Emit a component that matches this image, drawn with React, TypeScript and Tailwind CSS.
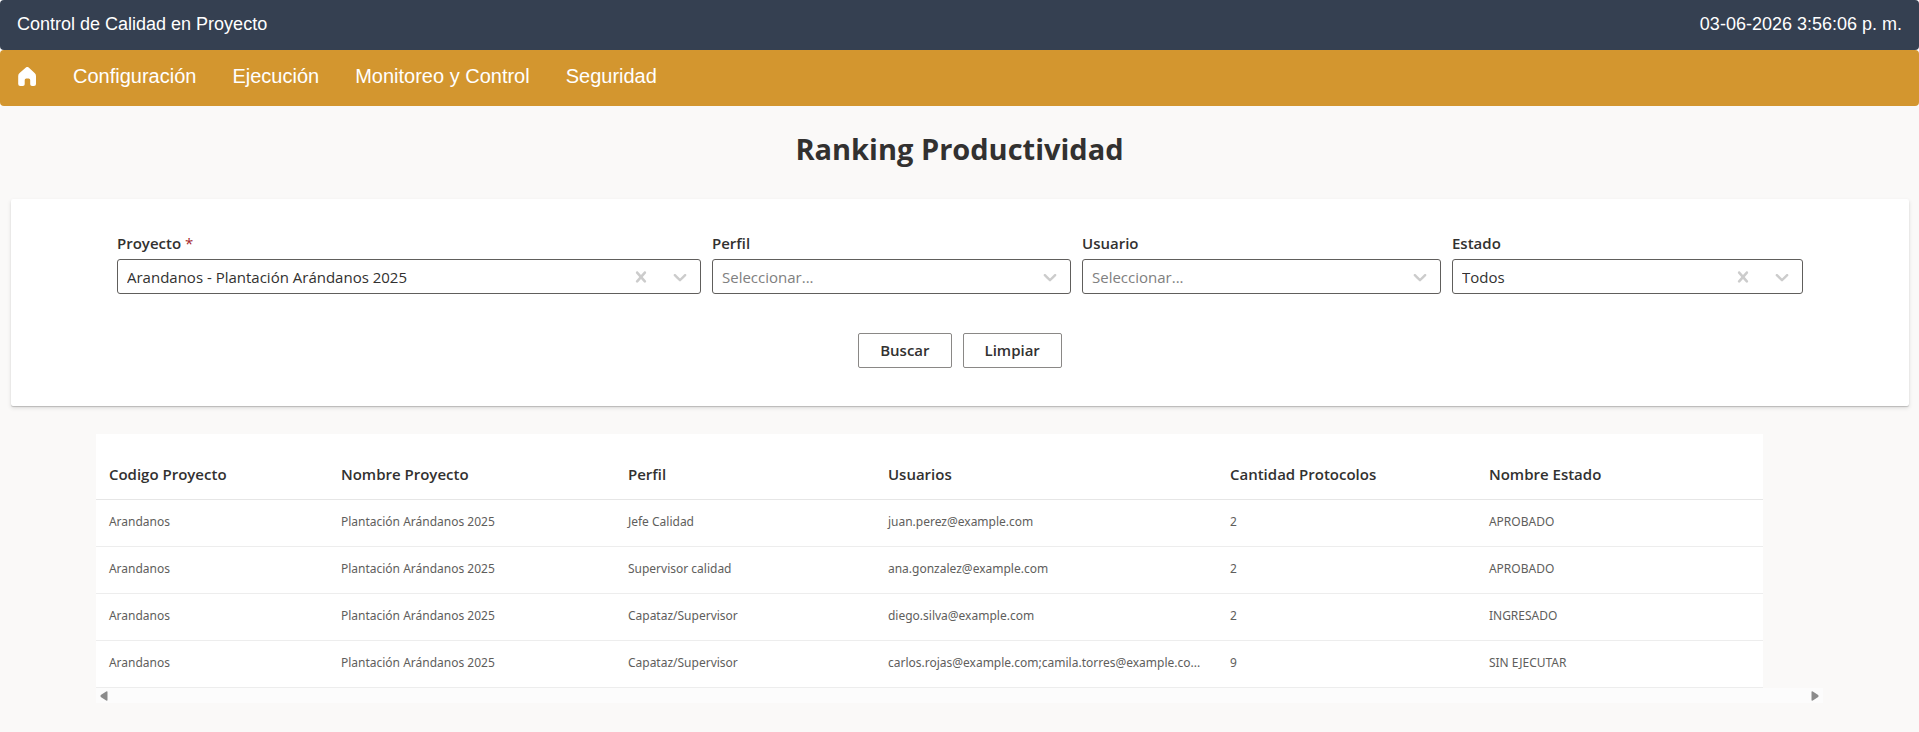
import { useState } from "react";

const navItems = ["Configuración", "Ejecución", "Monitoreo y Control", "Seguridad"];

const columns = [
    { name: "Codigo Proyecto", width: "w-[232px]" },
    { name: "Nombre Proyecto", width: "w-[287px]" },
    { name: "Perfil", width: "w-[260px]" },
    { name: "Usuarios", width: "w-[342px]" },
    { name: "Cantidad Protocolos", width: "w-[259px]" },
    { name: "Nombre Estado", width: "w-[287px]" },
];

const rows = [
    ["Arandanos", "Plantación Arándanos 2025", "Jefe Calidad", "juan.perez@example.com", "2", "APROBADO"],
    ["Arandanos", "Plantación Arándanos 2025", "Supervisor calidad", "ana.gonzalez@example.com", "2", "APROBADO"],
    ["Arandanos", "Plantación Arándanos 2025", "Capataz/Supervisor", "diego.silva@example.com", "2", "INGRESADO"],
    [
        "Arandanos",
        "Plantación Arándanos 2025",
        "Capataz/Supervisor",
        "carlos.rojas@example.com;camila.torres@example.co...",
        "9",
        "SIN EJECUTAR",
    ],
];

const App = () => {
    const [filters, setFilters] = useState({
        proyecto: "Arandanos - Plantación Arándanos 2025",
        perfil: "",
        usuario: "",
        estado: "Todos",
    });

    const setFilter = (key: string, value: string) => {
        setFilters((prev) => ({ ...prev, [key]: value }));
    };

    const clear = () => {
        setFilters({ proyecto: "", perfil: "", usuario: "", estado: "" });
    };

    return (
        <div className="min-h-screen bg-[#faf9f8] font-['Open_Sans',sans-serif] text-[#323130]">
            <header className="font-['Liberation_Sans',sans-serif] text-lg text-white bg-white">
                <div className="flex h-[50px] items-center justify-between rounded-[4px] bg-[#354051] px-[17px] pb-[2px]">
                    <span>Control de Calidad en Proyecto</span>
                    <time>03-06-2026 3:56:06 p. m.</time>
                </div>
                <nav className="flex h-[56px] items-center gap-9 rounded-[4px] bg-[#d3962f] px-[17px] pb-[3px]">
                    <a href="#inicio" aria-label="Inicio">
                        <HomeIcon />
                    </a>
                    {navItems.map((item) => (
                        <a key={item} href="#" className="text-[20px]">
                            {item}
                        </a>
                    ))}
                </nav>
            </header>

            <h1 className="pt-[21px] pb-7 text-center text-[29px] leading-[44px] font-bold">
                Ranking Productividad
            </h1>

            <section className="mr-[10px] ml-[11px] rounded-[2px] bg-white px-[106px] pt-[33px] pb-[38px] shadow-[0_1px_1px_rgba(0,0,0,0.18),0_2px_4px_rgba(0,0,0,0.12)]">
                <div className="flex gap-[11px]">
                    <Field
                        id="proyecto"
                        label="Proyecto"
                        required
                        className="flex-[584]"
                        options={["Arandanos - Plantación Arándanos 2025"]}
                        value={filters.proyecto}
                        onChange={setFilter}
                    />
                    <Field
                        id="perfil"
                        label="Perfil"
                        className="flex-[359]"
                        options={["Jefe Calidad", "Supervisor calidad", "Capataz/Supervisor"]}
                        value={filters.perfil}
                        onChange={setFilter}
                    />
                    <Field
                        id="usuario"
                        label="Usuario"
                        className="flex-[359]"
                        options={["juan.perez@example.com", "ana.gonzalez@example.com"]}
                        value={filters.usuario}
                        onChange={setFilter}
                    />
                    <Field
                        id="estado"
                        label="Estado"
                        className="flex-[351]"
                        options={["Todos", "APROBADO", "INGRESADO", "SIN EJECUTAR"]}
                        value={filters.estado}
                        onChange={setFilter}
                    />
                </div>
                <div className="mt-[39px] flex justify-center gap-[11px]">
                    <button className="h-[35px] rounded-[2px] border border-[#8a8886] px-[21px] text-[15px] font-semibold">
                        Buscar
                    </button>
                    <button
                        className="h-[35px] rounded-[2px] border border-[#8a8886] px-[21px] text-[15px] font-semibold"
                        onClick={clear}
                    >
                        Limpiar
                    </button>
                </div>
            </section>

            <div className="mx-[5%] mt-7">
                <table className="w-[1667px] table-fixed border-separate border-spacing-0 bg-white text-left">
                    <thead>
                        <tr className="h-[66px]">
                            {columns.map((col) => (
                                <th
                                    key={col.name}
                                    className={`${col.width} border-b border-[#e6e6e6] pt-4 pr-2 pl-[13px] text-[15px] font-semibold`}
                                >
                                    {col.name}
                                </th>
                            ))}
                        </tr>
                    </thead>
                    <tbody>
                        {rows.map((row, i) => (
                            <tr key={i} className="h-[47px] font-['Noto_Sans',sans-serif] text-xs text-[#605e5c]">
                                {row.map((cell, j) => (
                                    <td key={j} className="truncate border-b border-[#ededed] pr-2 pb-[2px] pl-[13px]">
                                        {cell}
                                    </td>
                                ))}
                            </tr>
                        ))}
                    </tbody>
                </table>
                <div className="flex h-[15px] items-center justify-between bg-[#fcfcfc] px-1">
                    <button aria-label="Desplazar a la izquierda">
                        <svg width="8" height="10" viewBox="0 0 8 10" fill="#8b8b8b">
                            <path d="M6.200.5Q7.500 0 7.500 1v8q0 1-1.300.5L.8 6Q0 5 .8 4z" />
                        </svg>
                    </button>
                    <button aria-label="Desplazar a la derecha">
                        <svg width="8" height="10" viewBox="0 0 8 10" fill="#8b8b8b">
                            <path d="M1.800.5Q.5 0 .5 1v8q0 1 1.300.5L7.200 6Q8 5 7.200 4z" />
                        </svg>
                    </button>
                </div>
            </div>
        </div>
    );
};

type FieldProps = {
    id: string;
    label: string;
    required?: boolean;
    className: string;
    options: string[];
    value: string;
    onChange: (key: string, value: string) => void;
};

const Field = ({ id, label, required, className, options, value, onChange }: FieldProps) => {
    return (
        <div className={`min-w-0 ${className}`}>
            <label htmlFor={id} className="block pb-[5px] text-[15px] leading-[22px] font-semibold">
                {label}
                {required && <span className="font-normal text-[#a4262c]"> *</span>}
            </label>
            <div className="relative">
                <select
                    id={id}
                    value={value}
                    onChange={(ev) => onChange(id, ev.target.value)}
                    className={`block h-[35px] w-full appearance-none rounded-[3px] border border-[#605e5c] bg-white pt-[2px] pr-20 pl-[9px] text-[15px] ${
                        value ? "text-[#323130]" : "text-[#808080]"
                    }`}
                >
                    <option value="">Seleccionar...</option>
                    {options.map((option) => (
                        <option key={option}>{option}</option>
                    ))}
                </select>
                <div className="pointer-events-none absolute inset-y-0 right-[10px] flex items-center gap-[17px] text-[#cccccc]">
                    {value && (
                        <button
                            className="pointer-events-auto"
                            aria-label={`Limpiar ${label}`}
                            onClick={() => onChange(id, "")}
                        >
                            <svg width="22" height="22" viewBox="0 0 20 20" fill="currentColor">
                                <path d="M14.348 14.849c-0.469 0.469-1.229 0.469-1.697 0l-2.651-3.030-2.651 3.029c-0.469 0.469-1.229 0.469-1.697 0-0.469-0.469-0.469-1.229 0-1.697l2.758-3.150-2.759-3.152c-0.469-0.469-0.469-1.228 0-1.697s1.228-0.469 1.697 0l2.652 3.031 2.651-3.031c0.469-0.469 1.228-0.469 1.697 0s0.469 1.229 0 1.697l-2.758 3.152 2.758 3.150c0.469 0.469 0.469 1.229 0 1.698z" />
                            </svg>
                        </button>
                    )}
                    <svg width="22" height="22" viewBox="0 0 20 20" fill="currentColor">
                        <path d="M4.516 7.548c0.436-0.446 1.043-0.481 1.576 0l3.908 3.747 3.908-3.747c0.533-0.481 1.141-0.446 1.574 0 0.436 0.445 0.408 1.197 0 1.615-0.406 0.418-4.695 4.502-4.695 4.502-0.217 0.223-0.502 0.335-0.787 0.335s-0.570-0.112-0.789-0.335c0 0-4.287-4.084-4.695-4.502s-0.436-1.170 0-1.615z" />
                    </svg>
                </div>
            </div>
        </div>
    );
};

const HomeIcon = () => {
    return (
        <svg width="20" height="20" viewBox="0 0 20 20" fill="white">
            <path d="M8.900.5q1.400-1.200 2.800 0l5.900 5.500q1.400 1.200 1.400 2.900v8.100q0 2-2 2h-2q-1.800 0-1.800-1.800v-4.200q0-1.500-1.500-1.500h-2.500q-1.500 0-1.500 1.500v4.200q0 1.800-1.800 1.800H3.200q-2 0-2-2V8.900q0-1.700 1.400-2.900z" />
        </svg>
    );
};

export default App;
